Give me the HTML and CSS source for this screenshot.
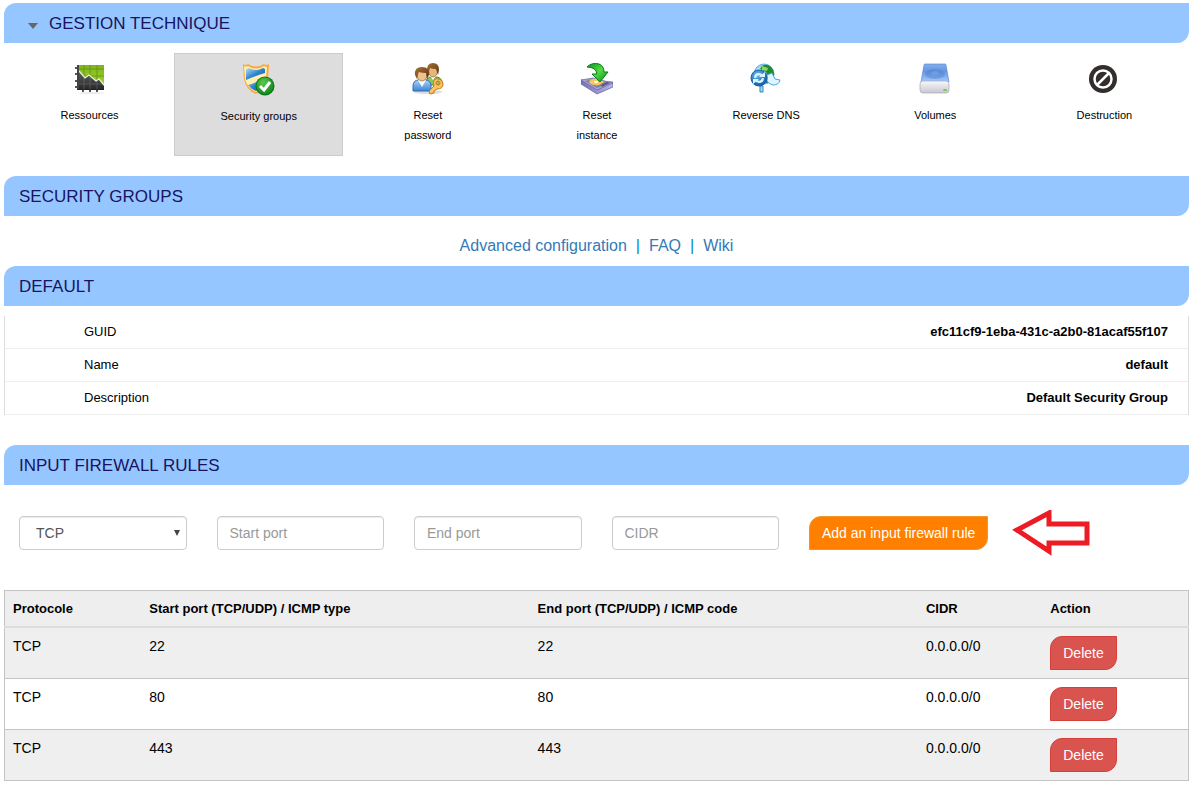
FILE: index.html
```
<!DOCTYPE html>
<html lang="en">
<head>
    <meta charset="UTF-8">
    <meta name="viewport" content="width=device-width, initial-scale=1.0">
    <title>Security groups</title>
    <link rel="stylesheet" href="styles.css">
</head>
<body>
    <h2 class="block-title">
        <svg class="caret" width="10" height="6" viewBox="0 0 10 6"><path d="M0 0h10L5 6z" fill="#666"/></svg>
        GESTION TECHNIQUE
    </h2>
    <nav class="tools">
        <a class="tool" href="#">
            <svg width="32" height="32" viewBox="0 0 32 32">
                <defs>
                    <linearGradient id="chart-green" x1="0" y1="0" x2="0" y2="1"><stop offset="0" stop-color="#7fb51c"/><stop offset="1" stop-color="#a4dc2c"/></linearGradient>
                    <linearGradient id="chart-dark" x1="0" y1="0" x2="0" y2="1"><stop offset="0" stop-color="#606262"/><stop offset="1" stop-color="#262626"/></linearGradient>
                </defs>
                <ellipse cx="17" cy="30" rx="13" ry="1" fill="#ececec"/>
                <path d="M1 5h4M1 11h4M1 18h4M1 24h4M9 26v3M16 26v3M23 26v3" stroke="#555" stroke-width="2"/>
                <path d="M3 2h27v25H3z" fill="url(#chart-green)"/>
                <path d="M10 2v25M16 2v25M23 2v25M4 6h26M4 13h26" stroke="#5c8a14" opacity=".7"/>
                <path d="M4 7l7 8 4-3 7 6 3-2 5 7v4H4z" fill="url(#chart-dark)"/>
                <path d="M10 15v11M16 14v12M23 18v8M5 21h25" stroke="#777" opacity=".5"/>
                <path d="M5 8l6 7 4-3 7 6 3-2 5 6" fill="none" stroke="#e8f4e0" stroke-width="1.200"/>
                <path d="M4 2v25" fill="none" stroke="#444" stroke-width="2"/>
                <path d="M3 26.500h27" fill="none" stroke="#222"/>
            </svg>
            <span>Ressources</span>
        </a>
        <a class="tool active" href="#">
            <svg width="32" height="32" viewBox="0 0 32 32">
                <defs>
                    <linearGradient id="shield-blue" x1="0" y1="0" x2="1" y2="1"><stop offset="0" stop-color="#b9ddf5"/><stop offset=".5" stop-color="#2f83cf"/><stop offset="1" stop-color="#0a5cad"/></linearGradient>
                    <radialGradient id="ok-green" cx=".4" cy=".3" r=".8"><stop offset="0" stop-color="#5cc94f"/><stop offset="1" stop-color="#0b7d17"/></radialGradient>
                </defs>
                <path d="M0 0q3 2 5 0 8 5 16 0 2 2 5 0l-1 15q-3 11-12 15Q3 26 1 15z" fill="#f8a93a"/>
                <path d="M1 2q3 1 4 0 8 5 16 0l3 1-1 12q-2 9-10 13Q4 24 2 15z" fill="#fff0b0"/>
                <path d="M3 5q2 0 3-1 7 4 14 0l2 1v4Q15 11 3 16z" fill="url(#shield-blue)"/>
                <path d="M5 21q11-3 17-8-1 9-9 14-5-2-8-6z" fill="url(#shield-blue)"/>
                <circle cx="22" cy="22" r="9.500" fill="#08751a"/>
                <circle cx="22" cy="22" r="8.500" fill="url(#ok-green)"/>
                <path d="M17 22l4 4 6-8" fill="none" stroke="#fff" stroke-width="3"/>
            </svg>
            <span>Security groups</span>
        </a>
        <a class="tool" href="#">
            <svg width="32" height="32" viewBox="0 0 32 32">
                <defs>
                    <linearGradient id="hair" x1="0" y1="0" x2="1" y2="1"><stop offset="0" stop-color="#a77236"/><stop offset="1" stop-color="#5d330f"/></linearGradient>
                    <linearGradient id="shirt" x1="0" y1="0" x2="0" y2="1"><stop offset="0" stop-color="#a9d3fb"/><stop offset="1" stop-color="#3e82d3"/></linearGradient>
                </defs>
                <ellipse cx="16" cy="29" rx="14" ry="2" fill="#ddd"/>
                <path d="M14 20q0-5 4-6h7q5 1 5 6v2H14z" fill="#8cc458" stroke="#4d8b27"/>
                <path d="M18 13l3 4 3-4z" fill="#fff"/>
                <ellipse cx="21" cy="8" rx="4.500" ry="6" fill="#e8b57e" stroke="#96622c" stroke-width=".7"/>
                <path d="M15 7q0-7 6-7 6 0 6 7l-1 5-2-6q-4 0-6-1l-2 6z" fill="url(#hair)"/>
                <path d="M1 28v-5q0-6 6-6h6q6 0 6 6v5z" fill="url(#shirt)" stroke="#2e6cb5"/>
                <path d="M6 17l4 7 4-7z" fill="#fff"/>
                <ellipse cx="10" cy="12" rx="5" ry="6" fill="#eec18d" stroke="#96622c" stroke-width=".7"/>
                <path d="M3 12q-1-8 7-8 8 0 7 8l-2 4-1-6q-4 0-7-1-1 1-2 7z" fill="url(#hair)"/>
                <path fill-rule="evenodd" d="M22 17q2-2 5-1 4 1 4 5 0 5-6 5l-3 2v2l-4 1-1-3 5-5q-1-4 0-6zm4 1a2 2 0 1 0 .1 0z" fill="#fac465" stroke="#c27719"/>
            </svg>
            <span>Reset<br>password</span>
        </a>
        <a class="tool" href="#">
            <svg width="32" height="32" viewBox="0 0 32 32">
                <defs>
                    <linearGradient id="arrow-green" x1="0" y1="0" x2="1" y2="1"><stop offset="0" stop-color="#0a8c21"/><stop offset=".5" stop-color="#52dc43"/><stop offset="1" stop-color="#07851c"/></linearGradient>
                    <linearGradient id="disk" x1="0" y1="0" x2="1" y2="0"><stop offset="0" stop-color="#7572b6"/><stop offset="1" stop-color="#b9b7e2"/></linearGradient>
                </defs>
                <path d="M0 17v4l16 10 16-7v-5z" fill="url(#disk)" stroke="#5f5c9d" stroke-width=".7"/>
                <path d="M0 17l12-2 20 5-16 7z" fill="#a5a3d5" stroke="#6966a6" stroke-width=".7"/>
                <path d="M4 18l8-2 16 4-12 5z" fill="#85829f"/>
                <path d="M8 19q2-4 9-3l6 3-5 3q-7 1-10-3z" fill="#f6c95c"/>
                <ellipse cx="15" cy="19" rx="2" ry="1" fill="#fff"/>
                <path d="M20 22l6-3 3 1-8 4z" fill="#5c5a80"/>
                <path d="M6 4Q11-1 18 1q5 2 5 8h4l-8 10-8-8h5Q15 4 6 4z" fill="url(#arrow-green)" stroke="#087a19"/>
            </svg>
            <span>Reset<br>instance</span>
        </a>
        <a class="tool" href="#">
            <svg width="32" height="32" viewBox="0 0 32 32">
                <defs>
                    <radialGradient id="globe" cx=".35" cy=".35" r=".8"><stop offset="0" stop-color="#e6f8ff"/><stop offset=".5" stop-color="#65b5e5"/><stop offset="1" stop-color="#07579e"/></radialGradient>
                    <radialGradient id="sync" cx=".4" cy=".3" r=".8"><stop offset="0" stop-color="#68bdec"/><stop offset="1" stop-color="#064c9a"/></radialGradient>
                </defs>
                <circle cx="14" cy="11" r="10" fill="url(#globe)" stroke="#75b6dc"/>
                <path d="M12 3q5-3 9 1 4 4 3 9l-5 3-3-7-6-3z" fill="#208b29"/>
                <path d="M12 3l6 2-1 3-5-1z" fill="#8ed16d"/>
                <path d="M17 12l5-2 3 6 5 1q-1 5-7 5-4-1-6-4z" fill="#dff6ff" stroke="#4ba5d7"/>
                <path d="M10 23h3v6h-3z" fill="#a7ddf5" stroke="#3383ba"/>
                <circle cx="9" cy="15" r="8" fill="url(#sync)" stroke="#1763a5"/>
                <path d="M4 15q0-5 5-5 3 0 5 3h-3q-4-2-5 2zM14 15q0 5-5 5-3 0-5-3h3q4 2 5-2z" fill="#d9f4ff"/>
                <path d="M9 14h6V9zM9 16H3v5z" fill="#d9f4ff"/>
            </svg>
            <span>Reverse DNS</span>
        </a>
        <a class="tool" href="#">
            <svg width="32" height="32" viewBox="0 0 32 32">
                <defs>
                    <linearGradient id="drive-top" x1="0" y1="0" x2="0" y2="1"><stop offset="0" stop-color="#82aeea"/><stop offset=".4" stop-color="#6596e0"/><stop offset="1" stop-color="#a3ccff"/></linearGradient>
                    <linearGradient id="drive-front" x1="0" y1="0" x2="0" y2="1"><stop offset="0" stop-color="#f8f8fa"/><stop offset="1" stop-color="#c8c7d1"/></linearGradient>
                </defs>
                <path d="M6 1h20q1 0 1 1l3 17H2L5 2q0-1 1-1z" fill="url(#drive-top)" stroke="#5d8bd0" stroke-width=".7"/>
                <ellipse cx="16" cy="11" rx="10" ry="5" fill="#4f7ec9" opacity=".45"/>
                <ellipse cx="16" cy="10" rx="4" ry="2" fill="#78a7ea" opacity=".5"/>
                <rect x="1" y="18" width="29" height="12" rx="3" fill="url(#drive-front)" stroke="#aaa9b5" stroke-width=".7"/>
                <ellipse cx="26" cy="27" rx="2" ry="1" fill="#62d43c"/>
            </svg>
            <span>Volumes</span>
        </a>
        <a class="tool" href="#">
            <svg width="32" height="32" viewBox="0 0 32 32">
                <circle cx="15" cy="16" r="14" fill="#332e2d"/>
                <circle cx="15" cy="16" r="8.500" fill="none" stroke="#fff" stroke-width="2.500"/>
                <path d="M9 22L21 10" stroke="#fff" stroke-width="2.500"/>
            </svg>
            <span>Destruction</span>
        </a>
    </nav>

    <h2 class="block-title">SECURITY GROUPS</h2>
    <div class="help-links">
        <a href="#">Advanced configuration</a>
        <span>|</span>
        <a href="#">FAQ</a>
        <span>|</span>
        <a href="#">Wiki</a>
    </div>

    <h2 class="block-title">DEFAULT</h2>
    <dl class="details">
        <div><dt>GUID</dt><dd>efc11cf9-1eba-431c-a2b0-81acaf55f107</dd></div>
        <div><dt>Name</dt><dd>default</dd></div>
        <div><dt>Description</dt><dd>Default Security Group</dd></div>
    </dl>

    <h2 class="block-title">INPUT FIREWALL RULES</h2>
    <form class="rule-form">
        <div class="field">
            <select class="form-control" aria-label="Protocol">
                <option>TCP</option>
                <option>UDP</option>
                <option>ICMP</option>
            </select>
        </div>
        <div class="field"><input class="form-control" type="text" placeholder="Start port" aria-label="Start port"></div>
        <div class="field"><input class="form-control" type="text" placeholder="End port" aria-label="End port"></div>
        <div class="field"><input class="form-control" type="text" placeholder="CIDR" aria-label="CIDR"></div>
        <div class="field submit">
            <button class="btn btn-add" type="button">Add an input firewall rule</button>
            <svg class="pointer" width="78" height="46" viewBox="0 0 78 46">
                <path d="M5 20L37 3v11h38v19H37v8z" transform="translate(0 0)" fill="#fff" stroke="#ed1c24" stroke-width="5"/>
            </svg>
        </div>
    </form>

    <table class="rules">
        <thead>
            <tr>
                <th class="col-protocol">Protocole</th>
                <th class="col-port">Start port (TCP/UDP) / ICMP type</th>
                <th class="col-port">End port (TCP/UDP) / ICMP code</th>
                <th class="col-cidr">CIDR</th>
                <th>Action</th>
            </tr>
        </thead>
        <tbody>
            <tr>
                <td>TCP</td>
                <td>22</td>
                <td>22</td>
                <td>0.0.0.0/0</td>
                <td><button class="btn btn-delete" type="button">Delete</button></td>
            </tr>
            <tr>
                <td>TCP</td>
                <td>80</td>
                <td>80</td>
                <td>0.0.0.0/0</td>
                <td><button class="btn btn-delete" type="button">Delete</button></td>
            </tr>
            <tr>
                <td>TCP</td>
                <td>443</td>
                <td>443</td>
                <td>0.0.0.0/0</td>
                <td><button class="btn btn-delete" type="button">Delete</button></td>
            </tr>
        </tbody>
    </table>
</body>
</html>
```
FILE: styles.css
```
* {
    box-sizing: border-box;
}
body {
    font-family: "Liberation Sans", Arial, sans-serif;
    font-size: 13px;
    line-height: 20px;
    margin: 0;
    padding: 3px 6px 5px 4px;
    background-color: white;
    color: black;
}
a {
    color: #337ab7;
    text-decoration: none;
}
a:hover {
    text-decoration: underline;
}
.block-title {
    display: flex;
    align-items: center;
    margin: 0;
    padding: 11px 15px 9px;
    background: #96c6ff;
    border-radius: 12px 0;
    color: #191361;
    font-size: 17px;
    font-weight: normal;
}
.caret {
    margin: 4px 11px 0 9px;
}

/* tool icons */
.tools {
    display: grid;
    grid-template-columns: repeat(7, 1fr);
    margin: 10px 0 20px;
    padding-left: 1px;
}
.tool {
    display: flex;
    flex-direction: column;
    align-items: center;
    gap: 10px;
    min-height: 103px;
    padding: 10px;
    color: black;
    font-size: 11px;
    text-align: center;
}
.tool.active {
    background: #ddd;
    border: 1px solid #ccc;
}

.help-links {
    display: flex;
    justify-content: center;
    gap: 9px;
    padding: 20px 0 10px;
    font-size: 16px;
    color: #0088cc;
}

/* group details */
.details {
    margin: 10px 0 30px;
    border: 1px solid #ddd;
    border-width: 0 1px;
}
.details div {
    display: flex;
    justify-content: space-between;
    padding: 6px 20px 6px 79px;
    border-bottom: 1px solid #eee;
}
.details dd {
    margin: 0;
    font-weight: bold;
}

/* new rule */
.rule-form {
    display: grid;
    grid-template-columns: repeat(4, 1fr) 2fr;
    margin: 31px 0 40px;
}
.field {
    padding: 0 15px;
}
.form-control {
    display: block;
    width: 100%;
    height: 34px;
    padding: 6px 12px;
    border: 1px solid #ccc;
    border-radius: 4px;
    background: white;
    box-shadow: inset 0 1px 1px rgba(0, 0, 0, 0.075);
    color: #555;
    font-family: inherit;
    font-size: 14px;
}
.form-control::placeholder {
    color: #999;
}
select.form-control {
    appearance: none;
    padding-left: 16px;
    background: white url("data:image/svg+xml,%3Csvg xmlns='http://www.w3.org/2000/svg' width='6' height='6'%3E%3Cpath d='M0 0h6L3 6z' fill='%23444'/%3E%3C/svg%3E") no-repeat right 6px center;
}
.submit {
    display: flex;
    align-items: center;
    gap: 24px;
    height: 34px;
}
.btn {
    height: 34px;
    padding: 6px 12px;
    border: 1px solid;
    border-radius: 12px 0;
    color: white;
    font-family: inherit;
    font-size: 14px;
    line-height: 20px;
    white-space: nowrap;
    cursor: pointer;
}
.btn-add {
    background: #ff8000;
    border-color: #f0942e;
}
.btn-delete {
    display: block;
    background: #d9534f;
    border-color: #d43f3a;
}
.pointer {
    flex: none;
}

/* rules table */
.rules {
    width: 100%;
    table-layout: fixed;
    border: 1px solid #c4c4c4;
    border-collapse: collapse;
}
.rules th,
.rules td {
    padding: 8px;
    text-align: left;
    vertical-align: top;
}
.rules th {
    padding-bottom: 7px;
    background: #eee;
    border-bottom: 2px solid #ddd;
}
.rules td {
    border-top: 1px solid #c4c4c4;
    font-size: 14px;
}
.rules tbody tr:nth-child(odd) {
    background: #efefef;
}
.col-protocol {
    width: 11.55%;
}
.col-port {
    width: 32.8%;
}
.col-cidr {
    width: 10.5%;
}
```
